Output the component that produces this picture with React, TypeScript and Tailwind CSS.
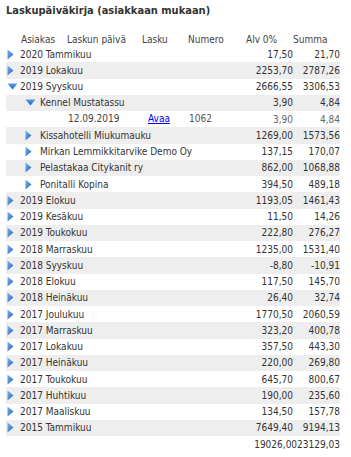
import React from "react";

type Row = {
  level: 0 | 1 | 2;
  label: string;
  open?: boolean;
  noIcon?: boolean;
  alv: string;
  sum: string;
  date?: string;
  num?: string;
};

const rows: Row[] = [
  { level: 0, label: "2020 Tammikuu", alv: "17,50", sum: "21,70" },
  { level: 0, label: "2019 Lokakuu", alv: "2253,70", sum: "2787,26" },
  { level: 0, label: "2019 Syyskuu", open: true, alv: "2666,55", sum: "3306,53" },
  { level: 1, label: "Kennel Mustatassu", open: true, alv: "3,90", sum: "4,84" },
  { level: 2, label: "", date: "12.09.2019", num: "1062", alv: "3,90", sum: "4,84" },
  { level: 1, label: "Kissahotelli Miukumauku", alv: "1269,00", sum: "1573,56" },
  { level: 1, label: "Mirkan Lemmikkitarvike Demo Oy", alv: "137,15", sum: "170,07" },
  { level: 1, label: "Pelastakaa Citykanit ry", alv: "862,00", sum: "1068,88" },
  { level: 1, label: "Ponitalli Kopina", alv: "394,50", sum: "489,18" },
  { level: 0, label: "2019 Elokuu", alv: "1193,05", sum: "1461,43" },
  { level: 0, label: "2019 Kesäkuu", alv: "11,50", sum: "14,26" },
  { level: 0, label: "2019 Toukokuu", alv: "222,80", sum: "276,27" },
  { level: 0, label: "2018 Marraskuu", alv: "1235,00", sum: "1531,40" },
  { level: 0, label: "2018 Syyskuu", alv: "-8,80", sum: "-10,91" },
  { level: 0, label: "2018 Elokuu", alv: "117,50", sum: "145,70" },
  { level: 0, label: "2018 Heinäkuu", alv: "26,40", sum: "32,74" },
  { level: 0, label: "2017 Joulukuu", alv: "1770,50", sum: "2060,59" },
  { level: 0, label: "2017 Marraskuu", alv: "323,20", sum: "400,78" },
  { level: 0, label: "2017 Lokakuu", alv: "357,50", sum: "443,30" },
  { level: 0, label: "2017 Heinäkuu", alv: "220,00", sum: "269,80" },
  { level: 0, label: "2017 Toukokuu", alv: "645,70", sum: "800,67" },
  { level: 0, label: "2017 Huhtikuu", alv: "190,00", sum: "235,60" },
  { level: 0, label: "2017 Maaliskuu", alv: "134,50", sum: "157,78" },
  { level: 0, label: "2015 Tammikuu", alv: "7649,40", sum: "9194,13" },
];

function RightTri() {
  return (
    <svg width="7" height="11" viewBox="0 0 7 11" className="shrink-0">
      <defs>
        <linearGradient id="rg" x1="0" y1="0" x2="1" y2="1">
          <stop offset="0" stopColor="#7fb2ea" />
          <stop offset="1" stopColor="#1d63c4" />
        </linearGradient>
      </defs>
      <path d="M0.5 0.5 L6.5 5.5 L0.5 10.5 Z" fill="url(#rg)" />
    </svg>
  );
}

function DownTri() {
  return (
    <svg width="11" height="7" viewBox="0 0 11 7" className="shrink-0">
      <defs>
        <linearGradient id="dg" x1="0" y1="0" x2="0" y2="1">
          <stop offset="0" stopColor="#5c9be4" />
          <stop offset="1" stopColor="#1d63c4" />
        </linearGradient>
      </defs>
      <path d="M0.5 0.5 L10.5 0.5 L5.5 6.5 Z" fill="url(#dg)" />
    </svg>
  );
}

export default function App() {
  return (
    <div
      className="w-[351px] h-[457px] bg-white text-[#333333] text-[10px] leading-none overflow-hidden"
      style={{ fontFamily: "'DejaVu Sans Condensed', 'DejaVu Sans', sans-serif", fontStretch: "condensed" }}
    >
      <div className="pl-[6px] pt-[5px] h-[33px] font-bold text-[11px] text-[#333333]">
        Laskupäiväkirja (asiakkaan mukaan)
      </div>
      <div className="ml-[6px] w-[334px]">
        <div className="flex items-center h-[13px] text-[#444444]">
          <span className="w-[15px]" />
          <span className="w-[46px]">Asiakas</span>
          <span className="w-[75px]">Laskun päivä</span>
          <span className="w-[46px]">Lasku</span>
          <span className="w-[58px]">Numero</span>
          <span className="w-[47px]">Alv 0%</span>
          <span>Summa</span>
        </div>
        {rows.map((r, i) => (
          <div
            key={i}
            className={
              "flex items-center h-[16.25px] " + (i % 2 === 1 ? "bg-[#eeeeee]" : "bg-white")
            }
          >
            {r.level === 2 ? (
              <>
                <span className="w-[62px]" />
                <span className="w-[80px] text-[#444444]">{r.date}</span>
                <span className="w-[41px] text-[#0000ee] underline">Avaa</span>
                <span className="flex-1 text-[#555555]">{r.num}</span>
              </>
            ) : (
              <>
                <span
                  className={
                    "flex items-center shrink-0 " +
                    (r.level === 0 ? "w-[14px] pl-[1px]" : "w-[34px] pl-[19px]")
                  }
                >
                  {r.open ? <DownTri /> : <RightTri />}
                </span>
                <span className="flex-1 whitespace-nowrap overflow-hidden pt-[1px]">{r.label}</span>
              </>
            )}
            <span
              className={
                "w-[50px] text-right pt-[1px] " + (r.level === 2 ? "text-[#666666]" : "")
              }
            >
              {r.alv}
            </span>
            <span
              className={
                "w-[47px] text-right pt-[1px] " + (r.level === 2 ? "text-[#666666]" : "")
              }
            >
              {r.sum}
            </span>
          </div>
        ))}
        <div className="flex items-center h-[16px]">
          <span className="flex-1" />
          <span className="text-right pt-[1px]">19026,0023129,03</span>
        </div>
      </div>
    </div>
  );
}
